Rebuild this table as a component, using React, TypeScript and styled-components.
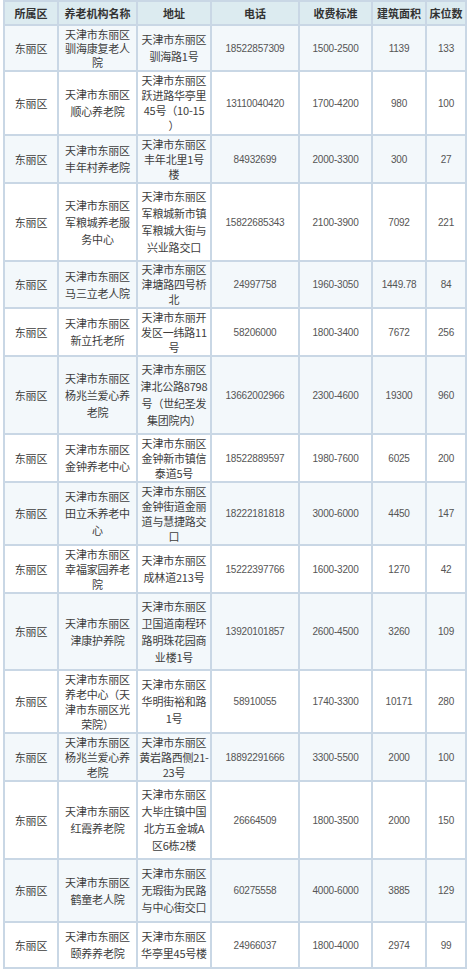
import styled, { createGlobalStyle } from 'styled-components'

const GlobalStyle = createGlobalStyle`
    body{
        margin:0;
        background:#fff;
        font-family: "Noto Sans CJK SC", "Liberation Sans", sans-serif;
    }
`

// row heights taken from the screenshot (header first)
const rowHeights = [22, 44, 62, 46, 76, 45, 46, 76, 46, 61, 46, 75, 61, 46, 76, 61, 44]

const Table = styled.div`
    display:grid;
    grid-template-columns: 52px 77px 72px 86px 71px 52px 38px;
    grid-template-rows: ${rowHeights.map(h => h + 'px').join(' ')};
    gap:2px;
    padding:2px;
    margin-left:3px;
    width:max-content;
    background-color:#c9d7e5;
`
const Row = styled.div`
    display:contents;
`
const HeadCell = styled.div`
    display:flex;
    align-items:center;
    justify-content:center;
    background-color:#dcebf0;
    color:#333;
    font-size:11px;
    font-weight:bold;
    white-space:nowrap;
    overflow:hidden;
`
const Cell = styled.div<{ $alt: boolean; $lh: number; $num?: boolean }>`
    display:flex;
    align-items:center;
    justify-content:center;
    text-align:center;
    background-color:${p => (p.$alt ? '#f3f8fb' : '#ffffff')};
    color:${p => (p.$num ? '#555' : '#3d3d3d')};
    font-family:${p => (p.$num ? '"Liberation Sans", Arial, sans-serif' : '"Noto Sans CJK SC", sans-serif')};
    font-size:${p => (p.$num ? '10px' : '11px')};
    line-height:${p => p.$lh}px;
    white-space:pre;
    letter-spacing:-0.2px;
`

const headers = ['所属区', '养老机构名称', '地址', '电话', '收费标准', '建筑面积', '床位数']

const rows: string[][] = [
    ['东丽区', '天津市东丽区\n驯海康复老人\n院', '天津市东丽区\n驯海路1号', '18522857309', '1500-2500', '1139', '133'],
    ['东丽区', '天津市东丽区\n顺心养老院', '天津市东丽区\n跃进路华亭里\n45号（10-15\n）', '13110040420', '1700-4200', '980', '100'],
    ['东丽区', '天津市东丽区\n丰年村养老院', '天津市东丽区\n丰年北里1号\n楼', '84932699', '2000-3300', '300', '27'],
    ['东丽区', '天津市东丽区\n军粮城养老服\n务中心', '天津市东丽区\n军粮城新市镇\n军粮城大街与\n兴业路交口', '15822685343', '2100-3900', '7092', '221'],
    ['东丽区', '天津市东丽区\n马三立老人院', '天津市东丽区\n津塘路四号桥\n北', '24997758', '1960-3050', '1449.78', '84'],
    ['东丽区', '天津市东丽区\n新立托老所', '天津市东丽开\n发区一纬路11\n号', '58206000', '1800-3400', '7672', '256'],
    ['东丽区', '天津市东丽区\n杨兆兰爱心养\n老院', '天津市东丽区\n津北公路8798\n号（世纪圣发\n集团院内）', '13662002966', '2300-4600', '19300', '960'],
    ['东丽区', '天津市东丽区\n金钟养老中心', '天津市东丽区\n金钟新市镇信\n泰道5号', '18522889597', '1980-7600', '6025', '200'],
    ['东丽区', '天津市东丽区\n田立禾养老中\n心', '天津市东丽区\n金钟街道金丽\n道与慧捷路交\n口', '18222181818', '3000-6000', '4450', '147'],
    ['东丽区', '天津市东丽区\n幸福家园养老\n院', '天津市东丽区\n成林道213号', '15222397766', '1600-3200', '1270', '42'],
    ['东丽区', '天津市东丽区\n津康护养院', '天津市东丽区\n卫国道南程环\n路明珠花园商\n业楼1号', '13920101857', '2600-4500', '3260', '109'],
    ['东丽区', '天津市东丽区\n养老中心（天\n津市东丽区光\n荣院）', '天津市东丽区\n华明街裕和路\n1号', '58910055', '1740-3300', '10171', '280'],
    ['东丽区', '天津市东丽区\n杨兆兰爱心养\n老院', '天津市东丽区\n黄岩路西侧21-\n23号', '18892291666', '3300-5500', '2000', '100'],
    ['东丽区', '天津市东丽区\n红霞养老院', '天津市东丽区\n大毕庄镇中国\n北方五金城A\n区6栋2楼', '26664509', '1800-3500', '2000', '150'],
    ['东丽区', '天津市东丽区\n鹤童老人院', '天津市东丽区\n无瑕街为民路\n与中心街交口', '60275558', '4000-6000', '3885', '129'],
    ['东丽区', '天津市东丽区\n颐养养老院', '天津市东丽区\n华亭里45号楼', '24966037', '1800-4000', '2974', '99'],
]

const lineHeight = (text: string, h: number) => {
    const lines = text.split('\n').length
    return Math.min(17, (h - 1) / lines)
}

export default function App() {
    return (
        <>
            <GlobalStyle />
            <Table>
                <Row>
                    {headers.map(h => <HeadCell key={h}>{h}</HeadCell>)}
                </Row>
                {rows.map((r, i) => (
                    <Row key={i}>
                        {r.map((c, j) => (
                            <Cell key={j} $alt={i % 2 === 0} $num={j >= 3} $lh={lineHeight(c, rowHeights[i + 1])}>
                                {c}
                            </Cell>
                        ))}
                    </Row>
                ))}
            </Table>
        </>
    )
}
